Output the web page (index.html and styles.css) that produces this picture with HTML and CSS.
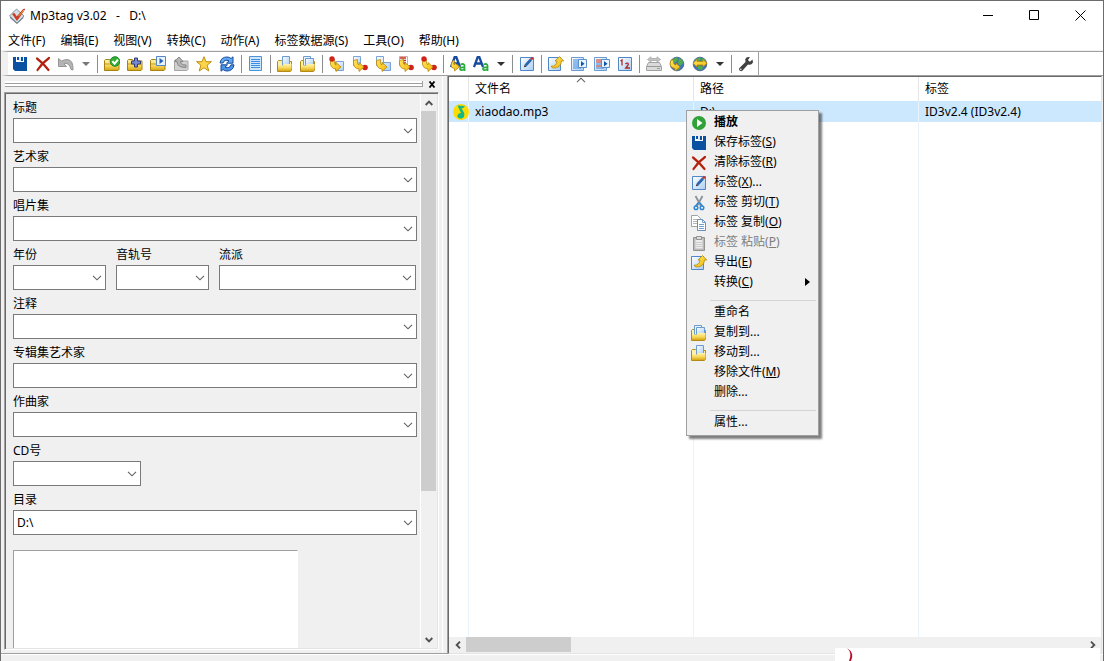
FILE: index.html
```html
<!DOCTYPE html>
<html lang="zh-CN">
<head>
<meta charset="utf-8">
<title>Mp3tag v3.02 - D:\</title>
<link rel="stylesheet" href="styles.css">
</head>
<body>
<svg class="sprite" aria-hidden="true">
  <defs>
    <linearGradient id="gFolder" x1="0" y1="0" x2="0" y2="1"><stop offset="0" stop-color="#fff3b0"/><stop offset="0.55" stop-color="#f7d85a"/><stop offset="1" stop-color="#d8a514"/></linearGradient>
    <linearGradient id="gPage" x1="0" y1="0" x2="1" y2="1"><stop offset="0" stop-color="#ffffff"/><stop offset="1" stop-color="#a9cdf5"/></linearGradient>
    <linearGradient id="gArrow" x1="0" y1="0" x2="1" y2="1"><stop offset="0" stop-color="#ffe75c"/><stop offset="1" stop-color="#f2b90f"/></linearGradient>
  </defs>
  <symbol id="save" viewBox="0 0 16 16"><path fill="#0a51a1" d="M1 1h14v14H3l-2-2z"/><path fill="#fff" d="M4 1h8v5H4z"/><path fill="#0a51a1" d="M5 1h2v3H5zM9 1h2v4H9z"/><path fill="#dfe9f5" d="M7 1h2v4H7z"/></symbol>
  <symbol id="cross" viewBox="0 0 16 16"><path d="M2 2.500Q8 7 13.500 14M14 2Q7 7 2.500 14" fill="none" stroke="#b3220f" stroke-width="2.200" stroke-linecap="round"/></symbol>
  <symbol id="undo" viewBox="0 0 16 16"><path fill="#b4b4b4" stroke="#858585" stroke-width=".8" d="M.5 2.500v8h8L6 7.800q5-2 7 5.700l2 .5Q15.500 3.500 9 3.500 6 3.500 3.500 5z"/></symbol>
  <symbol id="folder" viewBox="0 0 16 16"><path fill="url(#gFolder)" stroke="#a8820f" d="M.5 14.500v-10l1-1h4l1 1.500h8.500v8.500l-1 1z"/><path d="M1 8h13" stroke="#c39d28"/></symbol>
  <symbol id="folder-check" viewBox="0 0 16 16"><use href="#folder"/><circle cx="11" cy="5.500" r="4.800" fill="#35ae36" stroke="#1b8925"/><path d="M8.300 5.200l2.200 2.500 3.500-4" fill="none" stroke="#fff" stroke-width="2"/></symbol>
  <symbol id="folder-plus" viewBox="0 0 16 16"><use href="#folder"/><path d="M7.500 2h3v3h3v3h-3v3h-3V8h-3V5h3z" fill="#7a8bd0" stroke="#333b7c"/></symbol>
  <symbol id="folder-play" viewBox="0 0 16 16"><use href="#folder"/><path d="M6.500.5h9v9h-9z" fill="#e9f3ff" stroke="#5386c4"/><path d="M9.500 2l4 3-4 3z" fill="#2360b4"/></symbol>
  <symbol id="folder-up" viewBox="0 0 16 16"><path fill="#d0d0d0" stroke="#a5a5a5" d="M1.500 14.500V4.500l1-1h4l1 1.500h7.500v8.500l-1 1z"/><path d="M6 1L1.500 5.500H4Q4 11.500 13 11.500V9Q7.500 9 7.500 5.500H10z" fill="#b5b5b5" stroke="#868686"/></symbol>
  <symbol id="star" viewBox="0 0 16 16"><path d="M8 .7l2 5h5.400l-4.300 3.500 1.700 5.800L8 11.700 3.200 15l1.700-5.800L.6 5.700H6z" fill="#fbd64a" stroke="#bf8d0c"/></symbol>
  <symbol id="refresh" viewBox="0 0 16 16"><path d="M1 7Q2 1 8 1q2.500 0 4 1.500L14 .8v6.400H7.500L10 4.800Q5.500 3 4 7z" fill="#61a9f2" stroke="#154c9d"/><path d="M15 8.800Q14 15 8 15q-2.500 0-4-1.500L2 15.200V8.800h6.500L6 11.200q4.500 1.800 6-2.400z" fill="#4c94e8" stroke="#154c9d"/></symbol>
  <symbol id="list" viewBox="0 0 16 16"><path d="M1.500.5h12v14h-12z" fill="#cfe6ff" stroke="#4e93d6"/><path d="M3 3.500h9M3 5.500h9M3 7.500h9M3 9.500h9M3 11.500h9" stroke="#3d8de0"/></symbol>
  <symbol id="page" viewBox="0 0 16 16"><path d="M1.500 1.500h13v13h-13z" fill="url(#gPage)" stroke="#5087c6"/></symbol>
  <symbol id="move" viewBox="0 0 16 16"><path fill="#fff0a8" stroke="#b18b18" d="M.5 15.500V5.500l1-1h3l1 1h9v9l-1 1z"/><path d="M5.500.5h7v9h-7z" fill="url(#gPage)" stroke="#6c9bcd"/><path d="M1 9.500h5l1-1.500h7.500v6.500l-.5.500H1z" fill="url(#gFolder)"/></symbol>
  <symbol id="copy-folder" viewBox="0 0 16 16"><path fill="#fff0a8" stroke="#b18b18" d="M.5 15.500V5.500l1-1h3l1 1h9v9l-1 1z"/><path d="M3.500.5h7v9h-7z" fill="#e8f4ff" stroke="#6c9bcd"/><path d="M5.500 2.500h8v7h-8z" fill="url(#gPage)" stroke="#6c9bcd"/><path d="M1 9.500h5l1-1.500h7.500v6.500l-.5.500H1z" fill="url(#gFolder)"/></symbol>
  <symbol id="swoop" viewBox="0 0 16 16"><path d="M1.500 4.500Q.5 12.500 7 13v2.500l5-4.500-5-4.500V9Q5 8.500 5.500 3.500z" fill="url(#gArrow)" stroke="#b98508" stroke-width=".8"/></symbol>
  <symbol id="file-tag" viewBox="0 0 16 16"><path d="M6.500 5.500h8v9h-8z" fill="url(#gPage)" stroke="#7ba4d4"/><use href="#swoop"/><circle cx="3" cy="3" r="2.700" fill="#cf2419"/></symbol>
  <symbol id="tag-file" viewBox="0 0 16 16"><path d="M1.500.5h7v9h-7z" fill="url(#gPage)" stroke="#7ba4d4"/><circle cx="13" cy="11.500" r="2.800" fill="#cf2419"/><use href="#swoop"/></symbol>
  <symbol id="file-file" viewBox="0 0 16 16"><path d="M1.500.5h7v9h-7zM7.500 6.500h8v8h-8z" fill="url(#gPage)" stroke="#7ba4d4"/><use href="#swoop"/></symbol>
  <symbol id="text-tag" viewBox="0 0 16 16"><path d="M1.500.5h8v9h-8z" fill="#fff" stroke="#dfa49c"/><path d="M2 2h6M4 4.500h4M4 7h4" stroke="#bf3023" stroke-width="1.300"/><circle cx="13" cy="11.500" r="2.800" fill="#cf2419"/><use href="#swoop"/></symbol>
  <symbol id="tag-tag" viewBox="0 0 16 16"><circle cx="13" cy="11.500" r="2.800" fill="#cf2419"/><use href="#swoop"/><circle cx="3" cy="3" r="2.700" fill="#cf2419"/></symbol>
  <symbol id="case" viewBox="0 0 16 16"><path d="M1 11L4.700 1h1.600L10 11M2.500 7.500h6" fill="none" stroke="#184b9e" stroke-width="2.300"/><path d="M10.500 8.500q4-1.500 4 1.500v5M14 11.500q-4-.5-4 1.500.5 2 4 .5" fill="none" stroke="#2dac42" stroke-width="1.800"/></symbol>
  <symbol id="case-go" viewBox="0 0 16 16"><use href="#case"/><path d="M3 4.500Q-1.500 11.500 4.500 12.500V15l5-4.200-5-4V9Q3 8 4.500 5z" fill="url(#gArrow)" stroke="#b98508" stroke-width=".8"/></symbol>
  <symbol id="edit" viewBox="0 0 16 16"><use href="#page"/><path d="M6.500 9.500l5.500-6" stroke="#2c66ae" stroke-width="2.600"/><path d="M12 3.500L13.800 1.500" stroke="#ca3029" stroke-width="2.600"/><path d="M5 11.200l.6-2.400 1.900 1.600z" fill="#222"/></symbol>
  <symbol id="export" viewBox="0 0 16 16"><path d="M.5 1.500h12v13H.5z" fill="url(#gPage)" stroke="#5087c6"/><path d="M3 10.200Q8.500 10.500 9 5H7L11.500.5 15.700 5H13.500Q13 12.500 4.500 12z" fill="url(#gArrow)" stroke="#b98508" stroke-width=".8"/></symbol>
  <symbol id="action" viewBox="0 0 16 16"><path d="M.5 1.500h12v13H.5z" fill="url(#gPage)" stroke="#6a9bd2"/><path d="M2 4h8M2 6h6M2 8h6M2 10h6M2 12h8" stroke="#3c8ad8"/><path d="M7.500 3.500h8v8h-8z" fill="#eaf4ff" stroke="#5a8fca"/><path d="M10 5l3.500 2.700L10 10.500z" fill="#1456a5"/></symbol>
  <symbol id="action-red" viewBox="0 0 16 16"><path d="M.5 1.500h12v13H.5z" fill="url(#gPage)" stroke="#6a9bd2"/><path d="M2 4h8M2 6h6M2 10h6" stroke="#bd3026"/><path d="M2 8h6M2 12h8" stroke="#3c8ad8"/><path d="M7.500 3.500h8v8h-8z" fill="#eaf4ff" stroke="#5a8fca"/><path d="M10 5l3.500 2.700L10 10.500z" fill="#1456a5"/></symbol>
  <symbol id="number" viewBox="0 0 16 16"><use href="#page"/><path d="M3.500 5L5 4v5.500M8.500 8q1-1.200 2.500-.7.800 1-.3 2.200L8.700 12H13" fill="none" stroke="#a92b29" stroke-width="1.300"/></symbol>
  <symbol id="drive" viewBox="0 0 16 16"><path d="M.5 10.500l2-4h11l2 4v4H.5z" fill="#dadada" stroke="#a2a2a2"/><path d="M1 10.500h14M11 12.500h3" stroke="#999"/><path d="M1.500 3.500L5 .8V2.500h6V.8l3.500 2.700L11 6.200V4.500H5v1.700z" fill="#c4c4c4" stroke="#a0a0a0" stroke-width=".7"/></symbol>
  <symbol id="globe" viewBox="0 0 16 16"><circle cx="8" cy="8" r="6.800" fill="#3f75bb" stroke="#456078" stroke-width=".8"/><path d="M3 4q5-4 6-1L7 6 4 7zM10 2q4 1 4 5l-3 3-2-3zM6 9l5 2-1 3-4-1z" fill="#51ac4b"/></symbol>
  <symbol id="globe-down" viewBox="0 0 16 16"><use href="#globe"/><path d="M2 4q-3 7 4 8.500V15l5-4-4-4v2q-3 0-2.500-5z" fill="url(#gArrow)" stroke="#b98508" stroke-width=".8"/></symbol>
  <symbol id="globe-both" viewBox="0 0 16 16"><use href="#globe"/><path d="M1 7.200L5 3.500v2h6v-2l4 3.700-4 3.700V9H5v1.900z" fill="url(#gArrow)" stroke="#b98508" stroke-width=".8"/></symbol>
  <symbol id="wrench" viewBox="0 0 16 16"><path d="M14.500 3.500l-2.600 2.300-2-1.700L12 1.200Q8.500.2 7.200 3.200L7.500 6 1.200 12.300q-.7 1.700.8 2.500t2.500-.3L10 8.400q3.300 1 5-2z" fill="#414141"/><circle cx="2.800" cy="13.300" r=".8" fill="#fff"/></symbol>
  <symbol id="play" viewBox="0 0 16 16"><circle cx="8" cy="8" r="7" fill="#31a238"/><path d="M6 4l5.500 4L6 12z" fill="#fff"/></symbol>
  <symbol id="cut" viewBox="0 0 16 16"><path d="M4.500 1l5.500 10M11.500 1L6 11" stroke="#8b9298" stroke-width="1.800"/><path d="M7.500 7.500L4.500 11M8.500 7.500l3 3.500" stroke="#3088d4" stroke-width="1.500"/><circle cx="5" cy="12.800" r="1.800" fill="none" stroke="#3088d4" stroke-width="1.500"/><circle cx="11" cy="12.800" r="1.800" fill="none" stroke="#3088d4" stroke-width="1.500"/></symbol>
  <symbol id="copy" viewBox="0 0 16 16"><path d="M.5.500h6l3 3v8h-9z" fill="#fff" stroke="#a2a2a2"/><path d="M2 4.500h5M2 6.500h5M2 8.500h5" stroke="#b4b4b4"/><path d="M6.500 4.500h5l3 3v8h-8z" fill="#fff" stroke="#6d8fb5"/><path d="M11.500 4.500v3h3M8 9.500h5M8 11.500h5M8 13.500h5" fill="none" stroke="#6fa3d6"/></symbol>
  <symbol id="paste" viewBox="0 0 16 16"><path d="M2.500 2.500h11v13h-11z" fill="#bababa" stroke="#929292"/><path d="M4.500 4.500h7v9h-7z" fill="#ececec"/><path d="M5.500 1.500h5v3h-5z" fill="#ddd" stroke="#929292"/><path d="M5 7.500h6M5 9.500h6M5 11.500h6" stroke="#ccc"/></symbol>
  <symbol id="chevron" viewBox="0 0 10 6"><path d="M1 .8l4 4 4-4" fill="none" stroke="#606060" stroke-width="1.100"/></symbol>
  <symbol id="bold-chevron" viewBox="0 0 8 6"><path d="M.7 1L4 4.300 7.300 1" fill="none" stroke="#505050" stroke-width="1.900"/></symbol>
  <symbol id="caret" viewBox="0 0 8 4"><path d="M0 0h8L4 4z" fill="currentColor"/></symbol>
</svg>

<div class="window">
  <header class="titlebar">
    <svg class="app-icon" viewBox="0 0 16 16"><path d="M7.500 1L15 8l-7 7-7.500-7z" fill="#d3dee5" stroke="#8796a0"/><path d="M1 8.500l7 6.500 6.500-6V10L8 16 1 10z" fill="#687783"/><path d="M3.500 6l2-.5 2.200 3.500L14 1.500l2-.5L8 12.500z" fill="#d9391f" stroke="#b32b16" stroke-width=".6"/><path d="M9.500 8L15 2" stroke="#f4a52c"/></svg>
    <h1 class="title">Mp3tag v3.02&nbsp;&nbsp; -&nbsp;&nbsp; D:\</h1>
    <button class="win-btn" aria-label="最小化"><svg viewBox="0 0 11 11"><path d="M0 5.500h10"/></svg></button>
    <button class="win-btn" aria-label="最大化"><svg viewBox="0 0 11 11"><path d="M.5.500h9v9h-9z"/></svg></button>
    <button class="win-btn" aria-label="关闭"><svg viewBox="0 0 11 11"><path d="M.5.500l10 10M10.500.500l-10 10"/></svg></button>
  </header>

  <nav class="menubar">
    <button>文件(F)</button><button>编辑(E)</button><button>视图(V)</button><button>转换(C)</button><button>动作(A)</button><button>标签数据源(S)</button><button>工具(O)</button><button>帮助(H)</button>
  </nav>

  <div class="toolbar" role="toolbar" aria-label="工具栏">
    <button class="tool" aria-label="保存标签"><svg><use href="#save"/></svg></button>
    <button class="tool" aria-label="清除标签"><svg><use href="#cross"/></svg></button>
    <button class="tool" aria-label="撤消"><svg><use href="#undo"/></svg></button>
    <button class="drop muted" aria-label="撤消列表"><svg><use href="#caret"/></svg></button>
    <span class="sep"></span>
    <button class="tool" aria-label="更改目录"><svg><use href="#folder-check"/></svg></button>
    <button class="tool" aria-label="添加目录"><svg><use href="#folder-plus"/></svg></button>
    <button class="tool" aria-label="播放列表"><svg><use href="#folder-play"/></svg></button>
    <button class="tool" aria-label="上级目录"><svg><use href="#folder-up"/></svg></button>
    <button class="tool" aria-label="收藏目录"><svg><use href="#star"/></svg></button>
    <button class="tool" aria-label="刷新"><svg><use href="#refresh"/></svg></button>
    <span class="sep"></span>
    <button class="tool" aria-label="全选"><svg><use href="#list"/></svg></button>
    <span class="sep"></span>
    <button class="tool" aria-label="移动到"><svg><use href="#move"/></svg></button>
    <button class="tool" aria-label="复制到"><svg><use href="#copy-folder"/></svg></button>
    <span class="sep"></span>
    <button class="tool" aria-label="文件名到标签"><svg><use href="#file-tag"/></svg></button>
    <button class="tool" aria-label="标签到文件名"><svg><use href="#tag-file"/></svg></button>
    <button class="tool" aria-label="文件名到文件名"><svg><use href="#file-file"/></svg></button>
    <button class="tool" aria-label="文本文件到标签"><svg><use href="#text-tag"/></svg></button>
    <button class="tool" aria-label="标签到标签"><svg><use href="#tag-tag"/></svg></button>
    <span class="sep"></span>
    <button class="tool" aria-label="动作"><svg><use href="#case-go"/></svg></button>
    <button class="tool" aria-label="大小写"><svg><use href="#case"/></svg></button>
    <button class="drop" aria-label="大小写列表"><svg><use href="#caret"/></svg></button>
    <span class="sep"></span>
    <button class="tool" aria-label="扩展标签"><svg><use href="#edit"/></svg></button>
    <span class="sep"></span>
    <button class="tool" aria-label="导出"><svg><use href="#export"/></svg></button>
    <button class="tool" aria-label="播放全部"><svg><use href="#action"/></svg></button>
    <button class="tool" aria-label="播放所选"><svg><use href="#action-red"/></svg></button>
    <button class="tool" aria-label="音轨号向导"><svg><use href="#number"/></svg></button>
    <span class="sep"></span>
    <button class="tool" aria-label="光盘数据"><svg><use href="#drive"/></svg></button>
    <button class="tool" aria-label="下载数据"><svg><use href="#globe-down"/></svg></button>
    <button class="tool" aria-label="网络数据源"><svg><use href="#globe-both"/></svg></button>
    <button class="drop" aria-label="数据源列表"><svg><use href="#caret"/></svg></button>
    <span class="sep"></span>
    <button class="tool" aria-label="选项"><svg><use href="#wrench"/></svg></button>
    <span class="tool-end"></span>
  </div>

  <main class="main">
    <aside class="side">
      <div class="grip"><span class="grip-lines"></span><button class="grip-close" aria-label="关闭面板"><svg viewBox="0 0 8 7"><path d="M1.500 .5l5 6M6.500 .5l-5 6" stroke="#000" stroke-width="1.800"/></svg></button></div>
      <div class="panel">
        <form class="fields">
          <div class="field"><label for="f1">标题</label><div class="combo"><select id="f1"><option></option></select><svg><use href="#chevron"/></svg></div></div>
          <div class="field"><label for="f2">艺术家</label><div class="combo"><select id="f2"><option></option></select><svg><use href="#chevron"/></svg></div></div>
          <div class="field"><label for="f3">唱片集</label><div class="combo"><select id="f3"><option></option></select><svg><use href="#chevron"/></svg></div></div>
          <div class="triple">
            <div class="field"><label for="f4">年份</label><div class="combo"><select id="f4"><option></option></select><svg><use href="#chevron"/></svg></div></div>
            <div class="field"><label for="f5">音轨号</label><div class="combo"><select id="f5"><option></option></select><svg><use href="#chevron"/></svg></div></div>
            <div class="field"><label for="f6">流派</label><div class="combo"><select id="f6"><option></option></select><svg><use href="#chevron"/></svg></div></div>
          </div>
          <div class="field"><label for="f7">注释</label><div class="combo"><select id="f7"><option></option></select><svg><use href="#chevron"/></svg></div></div>
          <div class="field"><label for="f8">专辑集艺术家</label><div class="combo"><select id="f8"><option></option></select><svg><use href="#chevron"/></svg></div></div>
          <div class="field"><label for="f9">作曲家</label><div class="combo"><select id="f9"><option></option></select><svg><use href="#chevron"/></svg></div></div>
          <div class="field short"><label for="f10">CD号</label><div class="combo"><select id="f10"><option></option></select><svg><use href="#chevron"/></svg></div></div>
          <div class="field"><label for="f11">目录</label><div class="combo"><select id="f11"><option>D:\</option></select><svg><use href="#chevron"/></svg></div></div>
          <div class="cover"></div>
        </form>
        <div class="vscroll">
          <button class="arrow up" aria-label="向上滚动"><svg><use href="#bold-chevron"/></svg></button>
          <div class="vtrack"><div class="vthumb"></div></div>
          <button class="arrow" aria-label="向下滚动"><svg><use href="#bold-chevron"/></svg></button>
        </div>
      </div>
    </aside>

    <section class="list">
      <div class="table-area">
        <table>
          <colgroup><col class="c-icon"><col class="c-text"><col class="c-text"><col></colgroup>
          <thead><tr><th></th><th>文件名<svg class="sort"><use href="#chevron"/></svg></th><th>路径</th><th>标签</th></tr></thead>
          <tbody>
            <tr class="selected">
              <td class="icon-cell"><svg class="music" viewBox="0 0 16 16"><circle cx="8" cy="8" r="8" fill="#ffdc00"/><path d="M4.500 1.500l7.500.5-2 2.200H8.500L11.200 9q1 5-3.200 5.700-4.300-.4-3.500-3.400Q5.500 9 8 9z" fill="#12b886"/></svg></td>
              <td>xiaodao.mp3</td><td>D:\</td><td>ID3v2.4 (ID3v2.4)</td>
            </tr>
            <tr class="rest"><td></td><td></td><td></td><td></td></tr>
          </tbody>
        </table>
      </div>
      <div class="hscroll">
        <button class="arrow left" aria-label="向左滚动"><svg><use href="#bold-chevron"/></svg></button>
        <div class="htrack"><div class="hthumb"></div></div>
        <button class="arrow right" aria-label="向右滚动"><svg><use href="#bold-chevron"/></svg></button>
      </div>
    </section>
  </main>
  <footer class="status"></footer>

  <div class="context" role="menu">
    <button role="menuitem" class="strong"><svg><use href="#play"/></svg><span>播放</span></button>
    <button role="menuitem"><svg><use href="#save"/></svg><span>保存标签(<u>S</u>)</span></button>
    <button role="menuitem"><svg><use href="#cross"/></svg><span>清除标签(<u>R</u>)</span></button>
    <button role="menuitem"><svg><use href="#edit"/></svg><span>标签(<u>X</u>)...</span></button>
    <button role="menuitem"><svg><use href="#cut"/></svg><span>标签 剪切(<u>T</u>)</span></button>
    <button role="menuitem"><svg><use href="#copy"/></svg><span>标签 复制(<u>O</u>)</span></button>
    <button role="menuitem" disabled><svg><use href="#paste"/></svg><span>标签 粘贴(<u>P</u>)</span></button>
    <button role="menuitem"><svg><use href="#export"/></svg><span>导出(<u>E</u>)</span></button>
    <button role="menuitem"><svg></svg><span>转换(<u>C</u>)</span><i class="submenu"></i></button>
    <hr>
    <button role="menuitem"><svg></svg><span>重命名</span></button>
    <button role="menuitem"><svg><use href="#copy-folder"/></svg><span>复制到...</span></button>
    <button role="menuitem"><svg><use href="#move"/></svg><span>移动到...</span></button>
    <button role="menuitem"><svg></svg><span>移除文件(<u>M</u>)</span></button>
    <button role="menuitem"><svg></svg><span>删除...</span></button>
    <hr>
    <button role="menuitem"><svg></svg><span>属性...</span></button>
  </div>

  <div class="overlay"><svg viewBox="0 0 20 13"><path d="M12 0q8 5 4 13h-2q3.500-8-2-13z" fill="#b5112c"/></svg></div>
</div>
</body>
</html>
```
FILE: styles.css
```css
* { box-sizing: border-box; }

body {
  margin: 0;
  font: 12px/16px "Noto Sans", "Noto Sans CJK SC", sans-serif;
  color: #000;
}

button {
  margin: 0;
  padding: 0;
  border: 0;
  background: none;
  font: inherit;
  color: inherit;
}

.sprite { position: absolute; width: 0; height: 0; }

.window {
  position: relative;
  display: flex;
  flex-direction: column;
  height: 100vh;
  overflow: hidden;
  border: 1px solid #6d6b6b;
  border-bottom: 0;
  background: #f0f0f0;
}

/* Title bar and menu */
.titlebar {
  display: flex;
  align-items: center;
  height: 30px;
  padding-left: 8px;
  background: #fff;
}
.app-icon { width: 16px; height: 16px; }
.title { flex: 1; margin: 0 0 0 5px; font-size: 12px; font-weight: 400; }
.win-btn { display: grid; place-items: center; align-self: flex-start; width: 46px; height: 29px; }
.win-btn svg { width: 11px; height: 11px; fill: none; stroke: #000; }

.menubar {
  display: flex;
  gap: 1px;
  height: 20px;
  background: #fff;
  border-bottom: 1px solid #f0f0f0;
}
.menubar button { padding: 0 7px; white-space: nowrap; }

/* Toolbar */
.toolbar {
  display: flex;
  align-items: center;
  height: 25px;
  background: #fff;
  border-top: 1px solid #a0a0a0;
  border-bottom: 1px solid #a0a0a0;
  border-left: 7px solid #f0f0f0;
}
.tool { display: grid; place-items: center; width: 23px; height: 23px; }
.tool svg { width: 16px; height: 16px; }
.drop { display: grid; place-items: center; width: 17px; height: 23px; color: #333; }
.drop.muted { color: #777; }
.drop svg { width: 8px; height: 4px; }
.sep { width: 1px; height: 18px; margin: 0 2px 0 3px; background: #8d8d8d; }
.tool-end { width: 1px; height: 23px; margin-left: 1px; background: #a0a0a0; }

/* Tag panel */
.main { display: flex; flex: 1; min-height: 0; }
.side {
  display: flex;
  flex-direction: column;
  width: 446px;
  padding: 0 8px 3px 3px;
  border-bottom: 1px solid #a0a0a0;
  background: linear-gradient(#fff, #fff) right 4px top / 1px 100% no-repeat;
}
.grip { display: flex; align-items: center; height: 16px; gap: 3px; padding-right: 1px; }
.grip-lines {
  flex: 1;
  height: 6px;
  margin-left: 1px;
  border: solid #a0a0a0;
  border-width: 0 1px 1px 0;
  background: linear-gradient(#fff 0 1px, #fff 1px 2px, #a0a0a0 2px 3px, #fff 3px 5px);
}
.grip-close { display: grid; place-items: center; width: 12px; height: 12px; }
.grip-close svg { width: 8px; height: 7px; }
.panel {
  display: flex;
  flex: 1;
  min-height: 0;
  border: 1px solid #a0a0a0;
  border-right-color: #fff;
  border-bottom-color: #fff;
  box-shadow: inset 1px 1px #696969, inset -1px -1px #e3e3e3;
  padding: 1px;
}
.fields { flex: 1; min-width: 0; padding: 0 3px 0 7px; overflow: hidden; }
.field label { display: block; height: 24px; padding-top: 6px; }
.combo { display: grid; align-items: center; }
.combo > * { grid-area: 1 / 1; }
.combo select {
  width: 100%;
  height: 25px;
  padding: 0 20px 0 3px;
  appearance: none;
  border: 1px solid #7a7a7a;
  border-radius: 0;
  background: #fff;
  font: inherit;
  color: inherit;
}
.combo svg {
  justify-self: end;
  width: 10px;
  height: 6px;
  margin-right: 4px;
  pointer-events: none;
}
.triple { display: grid; grid-template-columns: 93px 93px 1fr; gap: 10px; padding-right: 1px; }
.short { width: 128px; }
.cover {
  width: 285px;
  height: 285px;
  margin-top: 15px;
  border: 1px solid #a0a0a0;
  border-right-color: #fff;
  background: #fff;
}

/* Scroll bars */
.arrow { display: grid; place-items: center; width: 17px; height: 17px; }
.arrow svg { width: 8px; height: 6px; }
.up svg { transform: rotate(180deg); }
.left svg { transform: rotate(90deg); }
.right svg { transform: rotate(-90deg); }
.vscroll {
  display: flex;
  flex-direction: column;
  width: 17px;
  border-left: 1px solid #fff;
}
.vscroll .arrow { width: 15px; }
.vtrack { flex: 1; }
.vthumb { width: 15px; height: 73%; background: #cdcdcd; }
.hscroll { display: flex; height: 16px; background: #f0f0f0; }
.hscroll .arrow { height: 15px; }
.htrack { flex: 1; }
.hthumb { width: 105px; height: 15px; background: #cdcdcd; }

/* File list */
.list {
  display: flex;
  flex: 1;
  flex-direction: column;
  min-width: 0;
  border: 1px solid;
  border-color: #696969 #e3e3e3 #e3e3e3 #696969;
  box-shadow: -1px 0 #a0a0a0;
  margin: 0 1px 0 1px;
  background: #fff;
}
.table-area { flex: 1; min-height: 0; }
table { width: 100%; height: 100%; table-layout: fixed; border-collapse: separate; border-spacing: 0; }
.c-icon { width: 20px; }
.c-text { width: 225px; }
th, td {
  padding: 0 6px;
  border-right: 1px solid #e8f3fd;
  text-align: left;
  font-weight: 400;
  white-space: nowrap;
}
th { position: relative; height: 24px; border-right-color: #e5e5e5; }
th:last-child, td:last-child { border-right: 0; }
.sort { position: absolute; top: 0; left: 107px; width: 10px; height: 6px; transform: rotate(180deg); }
.selected td { height: 21px; background: #cce8ff; }
.selected .icon-cell { padding: 0 0 0 4px; }
.music { display: block; width: 16px; height: 16px; overflow: visible; }
.status { height: 7px; border-top: 1px solid #fff; }

/* Context menu */
.context {
  position: absolute;
  left: 685px;
  top: 109px;
  width: 133px;
  padding: 1px 2px 3px;
  border: 1px solid #a0a0a0;
  background: #f0f0f0;
  box-shadow: 3px 3px 2px rgba(0, 0, 0, 0.5);
}
.context button {
  display: flex;
  align-items: center;
  width: 100%;
  height: 20px;
  padding-left: 2px;
  text-align: left;
  white-space: nowrap;
}
.context svg { flex: none; width: 16px; height: 16px; margin: 2px 7px 0 0; }
.context span { flex: 1; }
.context u { text-underline-offset: 1px; }
.context .strong { font-weight: 700; }
.context button:disabled { color: #7d7d7d; }
.context hr { height: 1px; margin: 8px 0 1px 21px; border: 0; background: #d4d4d4; }
.submenu {
  margin-right: 6px;
  border: 4px solid transparent;
  border-left: 5px solid #000;
  border-right: 0;
}

.overlay { position: absolute; right: 3px; bottom: 0; width: 265px; height: 13px; background: #fff; }
.overlay svg { display: block; width: 20px; height: 13px; }
```
